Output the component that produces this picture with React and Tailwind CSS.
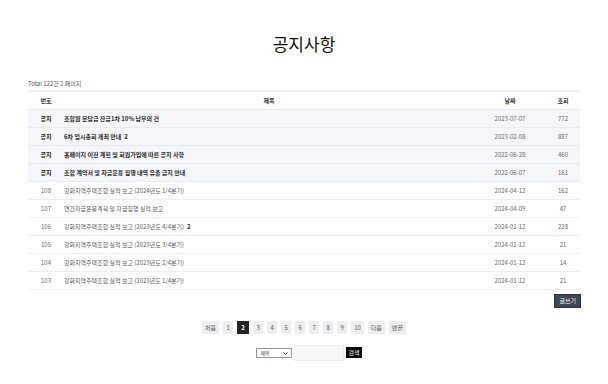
import React from "react";

const notices = [
  { title: "조합원 분담금 잔금1차 10% 납부의 건", date: "2023-07-07", views: 772 },
  { title: "6차 임시총회 개최 안내", badge: "2", date: "2023-02-08", views: 887 },
  { title: "홈페이지 이전 계획 및 회원가입에 따른 공지 사항", date: "2022-06-28", views: 460 },
  { title: "조합 계약서 및 자금운용 집행 내역 유출 금지 안내", date: "2022-06-07", views: 161 },
];

const posts = [
  { no: 108, title: "강화지역주택조합 실적 보고 (2024년도 1/4분기)", date: "2024-04-12", views: 162 },
  { no: 107, title: "연간자금운용계획 및 자금집행 실적 보고", date: "2024-04-09", views: 47 },
  { no: 106, title: "강화지역주택조합 실적 보고 (2023년도 4/4분기)", badge: "2", date: "2024-01-12", views: 228 },
  { no: 105, title: "강화지역주택조합 실적 보고 (2023년도 3/4분기)", date: "2024-01-12", views: 21 },
  { no: 104, title: "강화지역주택조합 실적 보고 (2023년도 2/4분기)", date: "2024-01-12", views: 14 },
  { no: 103, title: "강화지역주택조합 실적 보고 (2023년도 1/4분기)", date: "2024-01-12", views: 21 },
];

const pages = ["처음", "1", "2", "3", "4", "5", "6", "7", "8", "9", "10", "다음", "맨끝"];

export default function App() {
  return (
    <div
      className="w-[608px] h-[384px] bg-white overflow-hidden"
      style={{ fontFamily: '"Noto Sans CJK KR", "Noto Sans", sans-serif' }}
    >
      <h1 className="text-center text-[17px] leading-[25px] text-[#111] pt-[31px]">공지사항</h1>

      <div className="w-[552px] mx-auto mt-[23px]">
        <div className="text-[6px] leading-[9px] text-[#555] mb-[2px]">Total 122건 2 페이지</div>

        {/* 목록 */}
        <table className="w-full border-collapse text-[6px]">
          <thead>
            <tr className="border-t-2 border-[#eef1f4] border-b border-b-[#e6e9ec] h-[18px] text-[#333]">
              <th className="w-[36px] font-bold">번호</th>
              <th className="font-bold">제목</th>
              <th className="w-[72px] font-bold">날짜</th>
              <th className="w-[34px] font-bold">조회</th>
            </tr>
          </thead>
          <tbody>
            {notices.map((n) => (
              <tr key={n.title} className="h-[18px] bg-[#f5f6fa] border-b border-[#e9ebef]">
                <td className="text-center font-bold text-[#111]">공지</td>
                <td className="font-bold text-[#2a2a2a]">
                  {n.title}
                  {n.badge && <span className="ml-[3px]">{n.badge}</span>}
                </td>
                <td className="text-center text-[#666]">{n.date}</td>
                <td className="text-center text-[#666]">{n.views}</td>
              </tr>
            ))}
            {posts.map((p) => (
              <tr key={p.no} className="h-[18px] border-b border-[#eceef1]">
                <td className="text-center text-[#666]">{p.no}</td>
                <td className="text-[#5a5a5a]">
                  {p.title}
                  {p.badge && <span className="ml-[3px] font-bold text-[#222]">{p.badge}</span>}
                </td>
                <td className="text-center text-[#666]">{p.date}</td>
                <td className="text-center text-[#666]">{p.views}</td>
              </tr>
            ))}
          </tbody>
        </table>

        <div className="flex justify-end mt-[4px] -mr-[1px]">
          <button className="h-[14px] px-[4px] bg-[#414855] border border-[#2d333d] text-white text-[6px] leading-none">
            글쓰기
          </button>
        </div>

        {/* 페이지 */}
        <div className="flex justify-center gap-[4px] mt-[13px] text-[6px]">
          {pages.map((p) =>
            p === "2" ? (
              <span key={p} className="h-[13px] min-w-[12px] px-[3px] flex items-center justify-center bg-[#222] text-white font-bold">
                {p}
              </span>
            ) : (
              <span key={p} className="h-[13px] min-w-[10px] px-[3px] flex items-center justify-center bg-[#eceef1] text-[#555]">
                {p}
              </span>
            )
          )}
        </div>

        {/* 검색 */}
        <div className="flex justify-center items-center gap-[2px] mt-[11px] ml-[10px]">
          <div className="relative w-[36px] h-[10px] border border-[#999] bg-white flex items-center px-[3px]">
            <span className="text-[5px] leading-none text-[#333]">제목</span>
            <svg className="absolute right-[3px] top-[3px]" width="5" height="3" viewBox="0 0 5 3">
              <path d="M0.5 0.5 L2.5 2.5 L4.5 0.5" fill="none" stroke="#333" strokeWidth="1" />
            </svg>
          </div>
          <input className="w-[50px] h-[16px] bg-[#f7f7f7] border border-[#eee]" />
          <button className="h-[11px] px-[2px] bg-black text-white text-[6px] leading-none">검색</button>
        </div>
      </div>
    </div>
  );
}
